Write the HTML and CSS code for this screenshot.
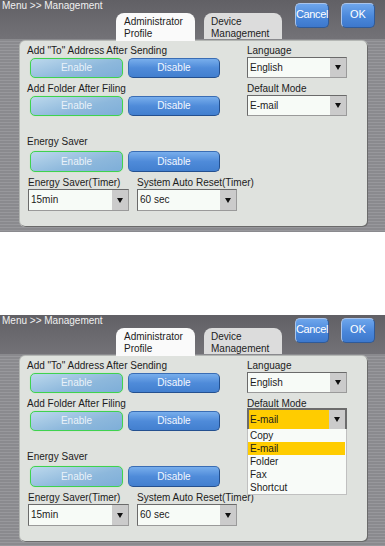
FILE: index.html
```html
<!DOCTYPE html>
<html lang="en">
<head>
    <meta charset="UTF-8">
    <meta name="viewport" content="width=device-width, initial-scale=1.0">
    <title>Management</title>
    <link rel="stylesheet" href="styles.css">
</head>
<body>
    <section class="screen">
        <div class="topbar">
            <div class="crumb">Menu &gt;&gt; Management</div>
            <div class="tab active">Administrator<br>Profile</div>
            <div class="tab second">Device<br>Management</div>
            <div class="hbtn cancel">Cancel</div>
            <div class="hbtn ok">OK</div>
        </div>
        <div class="stage">
            <div class="panel">
                <div class="col-left">
                    <div class="label first">Add "To" Address After Sending</div>
                    <div class="toggle">
                        <div class="btn on">Enable</div>
                        <div class="btn off">Disable</div>
                    </div>
                    <div class="label">Add Folder After Filing</div>
                    <div class="toggle">
                        <div class="btn on">Enable</div>
                        <div class="btn off">Disable</div>
                    </div>
                    <div class="label spaced">Energy Saver</div>
                    <div class="toggle tall">
                        <div class="btn on">Enable</div>
                        <div class="btn off">Disable</div>
                    </div>
                    <div class="timers">
                        <div class="field timer">
                            <div class="label">Energy Saver(Timer)</div>
                            <div class="select big"><span class="value">15min</span><span class="arrow"></span></div>
                        </div>
                        <div class="field timer">
                            <div class="label">System Auto Reset(Timer)</div>
                            <div class="select big"><span class="value">60 sec</span><span class="arrow"></span></div>
                        </div>
                    </div>
                </div>
                <div class="col-right">
                    <div class="label first">Language</div>
                    <div class="select"><span class="value">English</span><span class="arrow"></span></div>
                    <div class="label">Default Mode</div>
                    <div class="select"><span class="value">E-mail</span><span class="arrow"></span></div>
                </div>
            </div>
        </div>
    </section>

    <section class="screen lower">
        <div class="topbar">
            <div class="crumb">Menu &gt;&gt; Management</div>
            <div class="tab active">Administrator<br>Profile</div>
            <div class="tab second">Device<br>Management</div>
            <div class="hbtn cancel">Cancel</div>
            <div class="hbtn ok">OK</div>
        </div>
        <div class="stage">
            <div class="panel">
                <div class="col-left">
                    <div class="label first">Add "To" Address After Sending</div>
                    <div class="toggle">
                        <div class="btn on">Enable</div>
                        <div class="btn off">Disable</div>
                    </div>
                    <div class="label">Add Folder After Filing</div>
                    <div class="toggle">
                        <div class="btn on">Enable</div>
                        <div class="btn off">Disable</div>
                    </div>
                    <div class="label spaced">Energy Saver</div>
                    <div class="toggle tall">
                        <div class="btn on">Enable</div>
                        <div class="btn off">Disable</div>
                    </div>
                    <div class="timers">
                        <div class="field timer">
                            <div class="label">Energy Saver(Timer)</div>
                            <div class="select big"><span class="value">15min</span><span class="arrow"></span></div>
                        </div>
                        <div class="field timer">
                            <div class="label">System Auto Reset(Timer)</div>
                            <div class="select big"><span class="value">60 sec</span><span class="arrow"></span></div>
                        </div>
                    </div>
                </div>
                <div class="col-right">
                    <div class="label first">Language</div>
                    <div class="select"><span class="value">English</span><span class="arrow"></span></div>
                    <div class="label">Default Mode</div>
                    <div class="select open">
                        <span class="value">E-mail</span><span class="arrow"></span>
                        <div class="menu">
                            <div class="item">Copy</div>
                            <div class="item hl">E-mail</div>
                            <div class="item">Folder</div>
                            <div class="item">Fax</div>
                            <div class="item">Shortcut</div>
                        </div>
                    </div>
                </div>
            </div>
        </div>
    </section>
</body>
</html>
```

FILE: styles.css
```css
* {
    box-sizing: border-box;
}
body {
    margin: 0;
    background: #fff;
    font-family: "Liberation Sans", Arial, sans-serif;
    font-size: 10px;
    color: #1c1c1c;
    overflow: hidden;
}
.screen {
    height: 232px;
}
.lower {
    margin-top: 83px;
}

/* header bar */
.topbar {
    height: 39px;
    display: flex;
    background: linear-gradient(#616065, #737277);
}
.crumb {
    width: 116px;
    padding-left: 2px;
    line-height: 12px;
    color: #f0f0f0;
    white-space: nowrap;
}
.tab {
    align-self: flex-end;
    width: 79px;
    height: 26px;
    padding: 3px 0 0 8px;
    line-height: 12px;
    background: #dcdcdc;
    border-radius: 8px 8px 0 0;
    white-space: nowrap;
}
.tab.active {
    height: 28px;
    margin-bottom: -2px;
    background: #fafafa;
    position: relative;
    z-index: 1;
}
.tab.second {
    width: 78px;
    margin-left: 9px;
    padding-left: 7px;
}
.hbtn {
    width: 34px;
    height: 25px;
    margin-top: 3px;
    border-radius: 5px;
    border: 1px solid #a8c4ec;
    border-right-color: #2f5a98;
    border-bottom-color: #2f5a98;
    background: linear-gradient(#6ea6ec, #4a87da 55%, #3d78cc);
    color: #fff;
    font-size: 11px;
    line-height: 21px;
    text-align: center;
    white-space: nowrap;
}
.cancel {
    margin-left: 13px;
    letter-spacing: -0.4px;
}
.ok {
    margin-left: 12px;
}

/* striped area + panel */
.stage {
    height: 193px;
    padding: 2px 0 0 20px;
    background: repeating-linear-gradient(#8a8a8e 0 2px, #98989c 2px 3px);
}
.panel {
    width: 347px;
    height: 185px;
    display: flex;
    background: #dfe2de;
    border-radius: 5px;
    box-shadow: 1px 1px 0 #6a6a6a, 0 0 0 1px #b4b7b4;
}
.col-left {
    width: 227px;
    padding-left: 7px;
}
.col-right {
    width: 100px;
}
.label {
    height: 13px;
    margin-top: 4px;
    line-height: 13px;
    white-space: nowrap;
}
.label.first {
    margin-top: 3px;
}
.label.spaced {
    margin-top: 19px;
}

/* enable / disable pairs */
.toggle {
    display: flex;
    gap: 5px;
    margin: 1px 0 0 3px;
}
.toggle.tall {
    margin-top: 3px;
}
.btn {
    height: 20px;
    border-radius: 5px;
    line-height: 18px;
    text-align: center;
}
.tall .btn {
    height: 21px;
    line-height: 19px;
}
.btn.on {
    width: 93px;
    border: 1px solid #3fd24f;
    box-shadow: 0 0 1px #8df58f;
    background: linear-gradient(165deg, #bcd8ec, #8db8dc 60%, #7eaed8);
    color: #eaf2f9;
}
.btn.off {
    width: 92px;
    border: 1px solid #3a6db4;
    border-right-color: #24508f;
    border-bottom-color: #24508f;
    background: linear-gradient(#78aeec, #4f8bd9 50%, #427fcf);
    color: #f4f8ff;
}

/* selects */
.timers {
    display: flex;
    margin-top: 4px;
}
.timer {
    width: 101px;
    margin-left: 1px;
}
.timer + .timer {
    width: 100px;
    margin-left: 8px;
}
.timer .label {
    margin-top: 0;
}
.select {
    position: relative;
    display: flex;
    height: 21px;
    background: #f7fbf7;
    border: 1px solid #9a9a9a;
    border-top-color: #6a6a6a;
    border-left-color: #6a6a6a;
}
.select.big {
    height: 22px;
}
.value {
    flex: 1;
    padding-left: 2px;
    line-height: 19px;
}
.big .value {
    line-height: 20px;
}
.arrow {
    width: 16px;
    display: flex;
    align-items: center;
    justify-content: center;
    background: #cbcbcb;
}
.arrow::after {
    content: "";
    border-left: 3px solid transparent;
    border-right: 3px solid transparent;
    border-top: 5px solid #111;
}
.select.open {
    height: 23px;
    margin-top: -2px;
    background: #ffcc00;
    border: 2px solid #6c6c6c;
}
.select.open .value {
    padding-left: 1px;
    line-height: 19px;
}
.menu {
    position: absolute;
    top: 100%;
    left: -2px;
    right: -2px;
    z-index: 2;
    background: #f8fbf8;
    border: 1px solid #c0c0c0;
    border-top: 0;
}
.item {
    height: 13px;
    line-height: 13px;
    padding-left: 2px;
}
.item.hl {
    background: #ffcc00;
    margin-right: 1px;
}
```
